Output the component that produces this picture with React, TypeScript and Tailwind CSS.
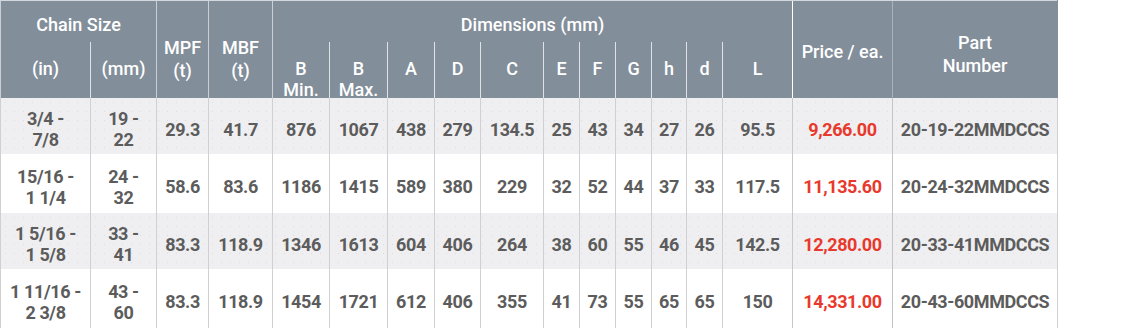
import React from 'react';

const colWidths = [
  'w-[90px]', 'w-[66px]', 'w-[52px]', 'w-[64px]', 'w-[57px]', 'w-[58px]', 'w-[47px]', 'w-[46px]',
  'w-[63px]', 'w-[36px]', 'w-[36px]', 'w-[36px]', 'w-[35px]', 'w-[36px]', 'w-[70px]', 'w-[100px]', 'w-[165px]',
];

type Row = {
  inch: [string, string];
  mm: [string, string];
  vals: string[];
  price: string;
  part: string;
};

const rows: Row[] = [
  { inch: ['3/4 -', '7/8'], mm: ['19 -', '22'], vals: ['29.3', '41.7', '876', '1067', '438', '279', '134.5', '25', '43', '34', '27', '26', '95.5'], price: '9,266.00', part: '20-19-22MMDCCS' },
  { inch: ['15/16 -', '1 1/4'], mm: ['24 -', '32'], vals: ['58.6', '83.6', '1186', '1415', '589', '380', '229', '32', '52', '44', '37', '33', '117.5'], price: '11,135.60', part: '20-24-32MMDCCS' },
  { inch: ['1 5/16 -', '1 5/8'], mm: ['33 -', '41'], vals: ['83.3', '118.9', '1346', '1613', '604', '406', '264', '38', '60', '55', '46', '45', '142.5'], price: '12,280.00', part: '20-33-41MMDCCS' },
  { inch: ['1 11/16 -', '2 3/8'], mm: ['43 -', '60'], vals: ['83.3', '118.9', '1454', '1721', '612', '406', '355', '41', '73', '55', '65', '65', '150'], price: '14,331.00', part: '20-43-60MMDCCS' },
];

const subHeads: React.ReactNode[] = [
  '(in)', '(mm)',
  <>B<br />Min.</>, <>B<br />Max.</>,
  'A', 'D', 'C', 'E', 'F', 'G', 'h', 'd', 'L',
];

const SubTh = ({ children, first }: { children: React.ReactNode; first?: boolean }) => (
  <th className={`p-0 align-top font-medium border-t border-t-[#828e9a] ${first ? 'border-l border-l-[#c9cfd5]' : 'border-l border-l-[#dfe3e7]'}`}>
    <div className="h-[55px] pt-[16px] leading-[21px]">{children}</div>
  </th>
);

export default function App() {
  return (
    <div className="w-[1138px] h-[332px] bg-white">
      <table className="table-fixed border-collapse w-[1057px] font-['Roboto',sans-serif] text-center">
        <colgroup>
          {colWidths.map((w, i) => (
            <col key={i} className={w} />
          ))}
        </colgroup>
        <thead className="bg-[#828e9a] text-white text-[18px]">
          <tr className="h-[41px]">
            <th colSpan={2} className="align-top pt-[13px] leading-[22px] font-medium border-t border-t-[#d3d8dc] border-l border-l-[#c9cfd5]">
              Chain Size
            </th>
            <th rowSpan={2} className="align-top pt-[35px] leading-[23px] font-medium border-t border-t-[#d3d8dc] border-l border-l-[#c9cfd5]">
              MPF<br />(t)
            </th>
            <th rowSpan={2} className="align-top pt-[35px] leading-[23px] font-medium border-t border-t-[#d3d8dc] border-l border-l-[#c9cfd5]">
              MBF<br />(t)
            </th>
            <th colSpan={11} className="align-top pt-[13px] leading-[22px] font-medium border-t border-t-[#d3d8dc] border-l border-l-[#c9cfd5]">
              Dimensions (mm)
            </th>
            <th rowSpan={2} className="align-top pt-[40px] leading-[22px] font-medium whitespace-nowrap border-t border-t-[#d3d8dc] border-l border-l-white">
              Price / ea.
            </th>
            <th rowSpan={2} className="align-top pt-[30px] leading-[23px] font-medium border-t border-t-[#d3d8dc] border-l border-l-[#a9b2bb] border-r border-r-[#828e9a]">
              Part<br />Number
            </th>
          </tr>
          <tr className="h-[56px]">
            {subHeads.map((h, i) => (
              <SubTh key={i} first={i === 0 || i === 2}>
                {h}
              </SubTh>
            ))}
          </tr>
        </thead>
        <tbody className="text-[18px] font-bold text-[#5c5c5c] leading-[21px] tracking-[-0.4px]">
          {rows.map((r, ri) => (
            <tr
              key={ri}
              className={
                ri % 2 === 0
                  ? 'h-[56px] bg-[#efeff1] bg-[radial-gradient(circle,#dcdce0_0.7px,transparent_0.9px)] bg-[length:9px_9px]'
                  : 'h-[59px] bg-white'
              }
            >
              <td className="align-middle pt-[7px] px-0 whitespace-nowrap border-l border-[#d0d0d3]">
                {r.inch[0]}<br />{r.inch[1]}
              </td>
              <td className="align-middle pt-[7px] px-0 whitespace-nowrap border-l border-[#d0d0d3]">
                {r.mm[0]}<br />{r.mm[1]}
              </td>
              {r.vals.map((v, vi) => (
                <td key={vi} className="align-middle pt-[7px] px-0 whitespace-nowrap border-l border-[#d0d0d3]">
                  {v}
                </td>
              ))}
              <td className="align-middle pt-[7px] px-0 whitespace-nowrap text-[#e8392c] border-l border-[#c9c9cc]">
                {r.price}
              </td>
              <td className="align-middle pt-[7px] px-0 whitespace-nowrap border-l border-l-[#c4c4c7] border-r border-r-[#d0d0d3]">
                {r.part}
              </td>
            </tr>
          ))}
        </tbody>
      </table>
    </div>
  );
}
